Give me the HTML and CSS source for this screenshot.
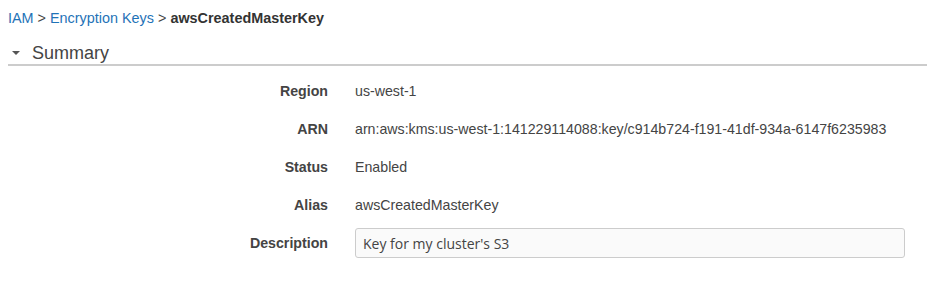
FILE: index.html
```html
<!DOCTYPE html>
<html lang="en">
<head>
    <meta charset="UTF-8">
    <title>awsCreatedMasterKey</title>
    <link rel="stylesheet" href="styles.css">
</head>
<body>
    <div class="crumbs">
        <a href="#">IAM</a> &gt; <a href="#">Encryption Keys</a> &gt; <b>awsCreatedMasterKey</b>
    </div>
    <div class="section">
        <div class="section-head">
            <span class="caret"></span>
            <span class="title">Summary</span>
        </div>
        <div class="details">
            <div class="label">Region</div>
            <div class="value">us-west-1</div>
            <div class="label">ARN</div>
            <div class="value">arn:aws:kms:us-west-1:141229114088:key/c914b724-f191-41df-934a-6147f6235983</div>
            <div class="label">Status</div>
            <div class="value">Enabled</div>
            <div class="label">Alias</div>
            <div class="value">awsCreatedMasterKey</div>
            <div class="label">Description</div>
            <div class="value"><input class="desc" type="text" value="Key for my cluster's S3"></div>
        </div>
    </div>
</body>
</html>
```

FILE: styles.css
```css
*{
    box-sizing: border-box;
}
body{
    margin: 0;
    padding: 8px 0 0 8px;
    font-family: "Liberation Sans", Arial, sans-serif;
    font-size: 14.2px;
    color: #444;
    background: #fff;
}

.crumbs{
    height: 20px;
    line-height: 20px;
    color: #444;
    font-size: 14.4px;
}
.crumbs a{
    color: #1f73b7;
    text-decoration: none;
}
.crumbs b{
    color: #333;
}

.section{
    margin-top: 15px;
}
.section-head{
    display: flex;
    align-items: center;
    height: 23px;
    border-bottom: 2px solid #ccc;
    padding-bottom: 1px;
}
.caret{
    width: 0;
    height: 0;
    border-left: 4px solid transparent;
    border-right: 4px solid transparent;
    border-top: 4px solid #555;
    margin: 0 12px 0 4px;
}
.title{
    font-size: 18px;
    color: #444;
}

.details{
    display: grid;
    grid-template-columns: 320px 1fr;
    column-gap: 27px;
    padding-top: 6px;
    padding-right: 22px;
}
.label, .value{
    height: 38px;
    display: flex;
    align-items: center;
}
.label{
    justify-content: flex-end;
    font-weight: bold;
    color: #444;
}
.value{
    color: #444;
}
.desc{
    width: 100%;
    height: 30px;
    border: 1px solid #ccc;
    border-radius: 3px;
    background: #fafafa;
    padding: 0 7px;
    font-family: "Open Sans", sans-serif;
    font-size: 14px;
    color: #444;
}
```
